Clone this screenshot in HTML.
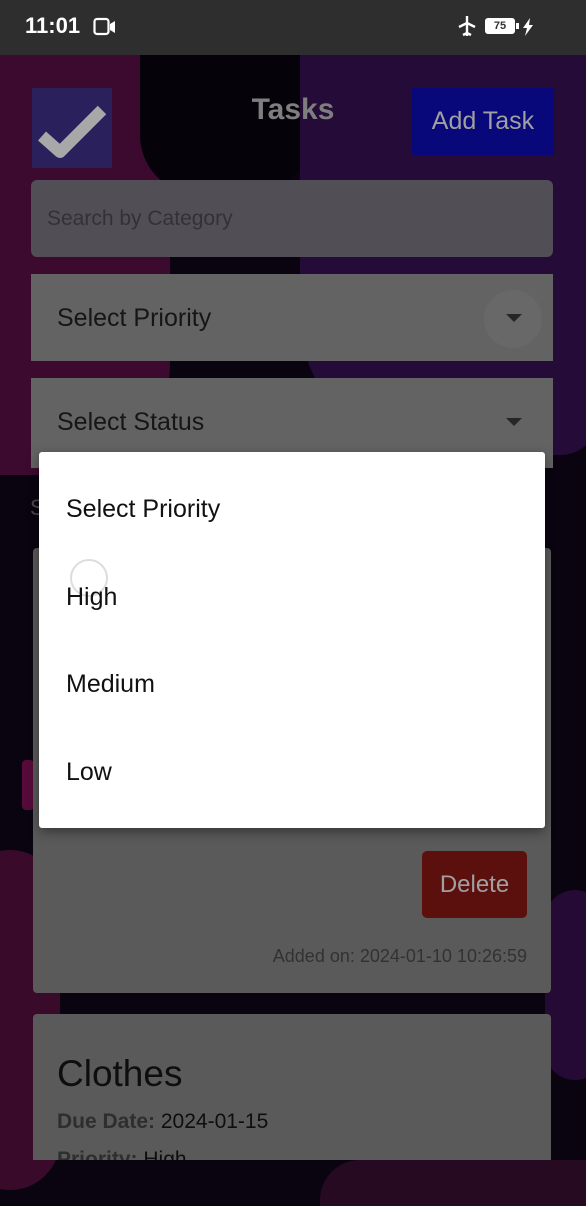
<!DOCTYPE html>
<html><head><meta charset="utf-8"><style>
*{margin:0;padding:0;box-sizing:border-box}
html,body{width:586px;height:1206px;overflow:hidden}
body{position:relative;font-family:"Liberation Sans",Roboto,sans-serif;background:#0a0410}
.abs{position:absolute}
.sb{left:0;top:0;width:586px;height:55px;background:#2e2e2e;color:#fff}
</style></head><body>
<!-- background -->
<div class="abs" style="left:0;top:55px;width:586px;height:1151px;background:#0a0410"></div>
<div class="abs" style="left:-40px;top:55px;width:210px;height:420px;background:#3c0a2e;border-radius:0 0 110px 40px"></div>
<div class="abs" style="left:140px;top:55px;width:170px;height:140px;background:#06020a;border-radius:0 0 60px 60px"></div>
<div class="abs" style="left:300px;top:55px;width:300px;height:400px;background:#250b38;border-radius:0 0 40px 140px"></div>
<div class="abs" style="left:-40px;top:850px;width:100px;height:340px;background:#3a0a2a;border-radius:60px"></div>
<div class="abs" style="left:320px;top:1160px;width:280px;height:46px;background:#260a22;border-radius:40px 0 0 0"></div>
<div class="abs" style="left:545px;top:890px;width:60px;height:190px;background:#240a34;border-radius:30px"></div>
<div class="abs" style="left:22px;top:760px;width:12px;height:50px;background:#560b3a;border-radius:4px"></div>

<!-- status bar -->
<div class="abs sb">
  <div class="abs" style="left:25px;top:13px;font-size:22px;font-weight:bold">11:01</div>
  <svg class="abs" style="left:93px;top:17px" width="24" height="20" viewBox="0 0 24 20"><rect x="1.5" y="2" width="14" height="15" rx="2.5" fill="none" stroke="#fff" stroke-width="2.2"/><path d="M17 7l5-3v12l-5-3z" fill="#fff"/></svg>
  <svg class="abs" style="left:457px;top:15px" width="20" height="22" viewBox="0 0 20 22"><path d="M10 1v20M2 12l8-4 8 4M6 20l4-2 4 2" stroke="#fff" stroke-width="2.4" fill="none"/></svg>
  <div class="abs" style="left:485px;top:18px;width:30px;height:16px;border:2px solid #fff;border-radius:3px;font-size:11px;font-weight:bold;text-align:center;line-height:12px;background:#fff;color:#333">75</div>
  <div class="abs" style="left:516px;top:23px;width:3px;height:6px;background:#fff"></div>
  <svg class="abs" style="left:522px;top:18px" width="12" height="18" viewBox="0 0 12 18"><path d="M8 0L1 10h4l-2 8 8-11H7z" fill="#fff"/></svg>
</div>

<!-- header -->
<div class="abs" style="left:32px;top:88px;width:80px;height:80px;background:#2a205c"></div>
<svg class="abs" style="left:36px;top:100px" width="72" height="60" viewBox="0 0 72 60"><path d="M6 36l18 16L66 10" stroke="#a8a8a8" stroke-width="12" fill="none" stroke-linejoin="round"/></svg>
<div class="abs" style="left:0;top:93px;width:586px;text-align:center;font-size:30px;font-weight:bold;color:#7e7e7e">Tasks</div>
<div class="abs" style="left:412px;top:88px;width:142px;height:67px;background:#08087a;color:#a0a0a0;font-size:25px;text-align:center;line-height:67px">Add Task</div>

<!-- search -->
<div class="abs" style="left:31px;top:180px;width:522px;height:77px;background:#524e56;border-radius:6px"></div>
<div class="abs" style="left:47px;top:207px;font-size:21px;color:#343136">Search by Category</div>

<div class="abs" style="left:31px;top:274px;width:522px;height:87px;background:#636363"></div>
<div class="abs" style="left:57px;top:304px;font-size:25px;color:#161616">Select Priority</div>
<div class="abs" style="left:484px;top:290px;width:58px;height:58px;border-radius:50%;background:#686868"></div>
<div class="abs" style="left:506px;top:314px;border-left:8px solid transparent;border-right:8px solid transparent;border-top:8px solid #262626"></div>

<div class="abs" style="left:31px;top:378px;width:522px;height:90px;background:#636363"></div>
<div class="abs" style="left:57px;top:408px;font-size:25px;color:#161616">Select Status</div>
<div class="abs" style="left:506px;top:418px;border-left:8px solid transparent;border-right:8px solid transparent;border-top:8px solid #262626"></div>

<div class="abs" style="left:30px;top:495px;font-size:22px;color:#4a4a4a">S</div>

<!-- card 1 -->
<div class="abs" style="left:33px;top:548px;width:518px;height:445px;background:#5a5a5a;border-radius:4px"></div>
<div class="abs" style="left:422px;top:851px;width:105px;height:67px;background:#5c100e;border-radius:5px;color:#a0a0a0;font-size:24px;text-align:center;line-height:67px">Delete</div>
<div class="abs" style="left:200px;top:946px;width:327px;text-align:right;font-size:18px;color:#323232">Added on: 2024-01-10 10:26:59</div>

<!-- card 2 -->
<div class="abs" style="left:33px;top:1014px;width:518px;height:146px;background:#5a5a5a;border-radius:4px 4px 0 0;overflow:hidden">
  <div class="abs" style="left:24px;top:39px;font-size:37px;color:#0e0e0e">Clothes</div>
  <div class="abs" style="left:24px;top:96px;font-size:21px;color:#2e2e2e;font-weight:bold">Due Date: <span style="color:#0e0e0e;font-weight:normal">2024-01-15</span></div>
  <div class="abs" style="left:24px;top:134px;font-size:21px;color:#2e2e2e;font-weight:bold">Priority: <span style="color:#0e0e0e;font-weight:normal">High</span></div>
</div>

<!-- dropdown -->
<div class="abs" style="left:39px;top:452px;width:506px;height:376px;background:#fff;border-radius:3px;box-shadow:0 4px 12px rgba(0,0,0,.4)"></div>
<div class="abs" style="left:66px;top:495px;font-size:25px;color:#111">Select Priority</div>
<div class="abs" style="left:70px;top:559px;width:38px;height:38px;border-radius:50%;border:2px solid #ddd"></div>
<div class="abs" style="left:66px;top:583px;font-size:25px;color:#111">High</div>
<div class="abs" style="left:66px;top:670px;font-size:25px;color:#111">Medium</div>
<div class="abs" style="left:66px;top:758px;font-size:25px;color:#111">Low</div>
</body></html>
